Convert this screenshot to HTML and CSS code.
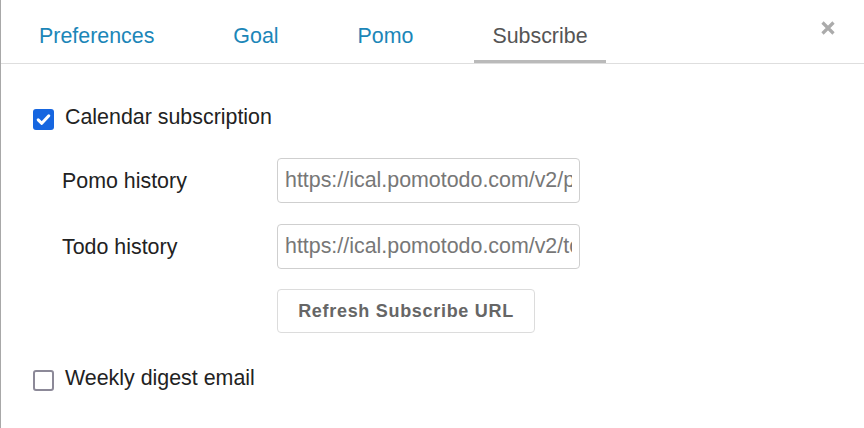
FILE: index.html
```html
<!DOCTYPE html>
<html>
<head>
<meta charset="utf-8">
<link rel="stylesheet" href="styles.css">
</head>
<body>
<div class="modal">
  <div class="tabs">
    <a class="tab">Preferences</a>
    <a class="tab">Goal</a>
    <a class="tab">Pomo</a>
    <a class="tab active">Subscribe</a>
  </div>
  <button class="close" aria-label="Close">
    <svg width="14" height="14" viewBox="0 0 14 14"><path d="M1.5 1.5 L12.5 12.5 M12.5 1.5 L1.5 12.5" stroke="#ababab" stroke-width="3.2" stroke-linecap="butt"/></svg>
  </button>
  <div class="content">
    <label class="check-row">
      <span class="box checked">
        <svg width="21" height="21" viewBox="0 0 21 21"><path d="M5.2 10.8 L8.8 14.3 L15.8 6.8" fill="none" stroke="#fff" stroke-width="3" stroke-linecap="round" stroke-linejoin="round"/></svg>
      </span>
      <span class="check-label">Calendar subscription</span>
    </label>
    <div class="form">
      <div class="form-row">
        <span class="field-label">Pomo history</span>
        <input class="field" type="text" value="https://ical.pomotodo.com/v2/pomos/abcdef" readonly>
      </div>
      <div class="form-row">
        <span class="field-label">Todo history</span>
        <input class="field" type="text" value="https://ical.pomotodo.com/v2/todos/abcdef" readonly>
      </div>
      <div class="form-row">
        <span class="field-label"></span>
        <button class="refresh">Refresh Subscribe URL</button>
      </div>
    </div>
    <label class="check-row weekly">
      <span class="box"></span>
      <span class="check-label">Weekly digest email</span>
    </label>
  </div>
</div>
</body>
</html>
```

FILE: styles.css
```css
html, body {
  margin: 0;
  padding: 0;
  background: #fff;
}
body {
  font-family: "Liberation Sans", Arial, sans-serif;
  color: #222;
}
.modal {
  position: relative;
  width: 864px;
  height: 428px;
  box-sizing: border-box;
  border-left: 1px solid #a8a8a8;
  background: #fff;
  overflow: hidden;
}
.tabs {
  display: flex;
  gap: 43px;
  padding-left: 20px;
  height: 64px;
  box-sizing: border-box;
  border-bottom: 1px solid #dedede;
}
.tab {
  display: block;
  height: 63px;
  box-sizing: border-box;
  padding: 24px 18px 0;
  font-size: 21.4px;
  color: #1b86b8;
  border-bottom: 3px solid transparent;
  margin-bottom: -1px;
  cursor: pointer;
}
.tab.active {
  color: #555;
  border-bottom-color: #bababa;
}
.close {
  position: absolute;
  top: 21px;
  right: 29px;
  width: 14px;
  height: 14px;
  padding: 0;
  border: 0;
  background: none;
  display: block;
}
.close svg { display: block; }
.content {
  padding: 41px 0 0 32px;
}
.check-row {
  display: flex;
  align-items: center;
  font-size: 21.4px;
  line-height: 25px;
}
.box {
  width: 21px;
  height: 21px;
  box-sizing: border-box;
  border-radius: 3px;
  border: 2.5px solid #8c8998;
  margin-right: 11px;
  margin-top: 3px;
  flex: none;
}
.box.checked {
  border: 0;
  background: #1666e0;
}
.box svg { display: block; }
.form {
  margin: 28px 0 0 29px;
  display: flex;
  flex-direction: column;
  gap: 21px;
}
.form-row {
  display: flex;
  align-items: center;
}
.field-label {
  width: 215px;
  font-size: 21.4px;
  padding-top: 1px;
}
.field {
  width: 303px;
  height: 45px;
  box-sizing: border-box;
  border: 1px solid #cfcfcf;
  border-radius: 4px;
  padding: 0 7px;
  font-family: "Liberation Sans", Arial, sans-serif;
  font-size: 21.4px;
  color: #777;
  outline: none;
}
.refresh {
  height: 44px;
  width: 258px;
  box-sizing: border-box;
  border: 1px solid #dcdcdc;
  border-radius: 4px;
  background: #fff;
  font-family: "Liberation Sans", Arial, sans-serif;
  font-weight: bold;
  font-size: 18px;
  letter-spacing: 0.7px;
  color: #666;
  padding: 0;
  margin-top: -1px;
}
.weekly {
  margin-top: 33px;
}
```
